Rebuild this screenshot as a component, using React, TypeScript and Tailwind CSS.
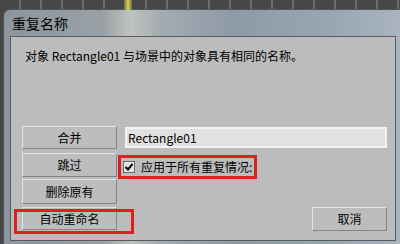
import React from "react";

function Btn({ label, className = "" }: { label: string; className?: string }) {
  return (
    <div
      className={
        "flex items-center justify-center bg-[#bdbdbd] border-t border-l border-t-[#e4e4e4] border-l-[#e4e4e4] border-b border-r border-b-[#858585] border-r-[#858585] text-[12px] leading-none text-black " +
        className
      }
    >
      {label}
    </div>
  );
}

export default function App() {
  return (
    <div className="relative w-[400px] h-[244px] overflow-hidden bg-[#464646] bg-[repeating-linear-gradient(90deg,#474747_0px,#474747_19px,#6c6c6c_19px,#6c6c6c_21px)] font-['Noto_Sans_CJK_SC','Noto_Sans',sans-serif]">
      <div className="absolute left-[124px] top-0 w-[8px] h-[10px] bg-[linear-gradient(90deg,#6b6a40,#e0d060,#6b6a40)]" />
      <div className="ml-[3px] mt-[9px] h-[236px] w-[397px] rounded-tl-[7px] border-l border-t border-[#4e565e] bg-[linear-gradient(90deg,#8c959e_0%,#9aa1a6_25%,#bfc3bd_32%,#a3abb1_40%,#8e9aa7_58%,#97a4b1_80%,#a9b4be_100%)]">
        <div className="h-[26px] flex items-center pl-[8px] text-[14px] text-black leading-none">
          重复名称
        </div>
        <div className="ml-[6px] mr-[4px] h-[205px] border border-[#5b5b5b] bg-[#bcbcbc] flex flex-col">
          <div className="pl-[14px] pt-[11px] text-[12px] leading-[16px] text-black">
            对象 Rectangle01 与场景中的对象具有相同的名称。
          </div>
          <div className="mt-[62px] pl-[11px] pr-[8px] flex flex-col">
            <div className="flex items-start gap-[8px]">
              <Btn label="合并" className="w-[95px] h-[23px]" />
              <div className="mt-[1px] flex-1 h-[21px] border-2 border-[#f3f3f3] bg-[#e1e1e1] flex items-center pl-[1px] text-[12px] leading-none text-black">
                Rectangle01
              </div>
            </div>
            <div className="mt-[4px] flex items-start">
              <Btn label="跳过" className="w-[95px] h-[24px]" />
              <div className="ml-[1px] mt-[2px] w-[139px] h-[24px] border-[3px] border-[#dc2020] flex items-center pl-[2px]">
                <div className="w-[12px] h-[12px] border border-[#6a6a6a] bg-[#e6e6e6] flex items-center justify-center">
                  <svg width="10" height="10" viewBox="0 0 10 10">
                    <path d="M1.5 5 L4 7.5 L8.5 2" fill="none" stroke="#000" strokeWidth="2" />
                  </svg>
                </div>
                <span className="ml-[6px] text-[12px] leading-none text-black whitespace-nowrap">
                  应用于所有重复情况:
                </span>
              </div>
            </div>
            <Btn label="删除原有" className="w-[95px] h-[25px]" />
            <div className="mt-[3px] flex items-start">
              <div className="relative">
                <Btn label="自动重命名" className="w-[95px] h-[23px]" />
                <div className="absolute left-[-8px] top-[2px] w-[120px] h-[25px] border-[3px] border-[#dc2020]" />
              </div>
              <Btn label="取消" className="ml-auto w-[75px] h-[24px]" />
            </div>
          </div>
        </div>
      </div>
    </div>
  );
}
